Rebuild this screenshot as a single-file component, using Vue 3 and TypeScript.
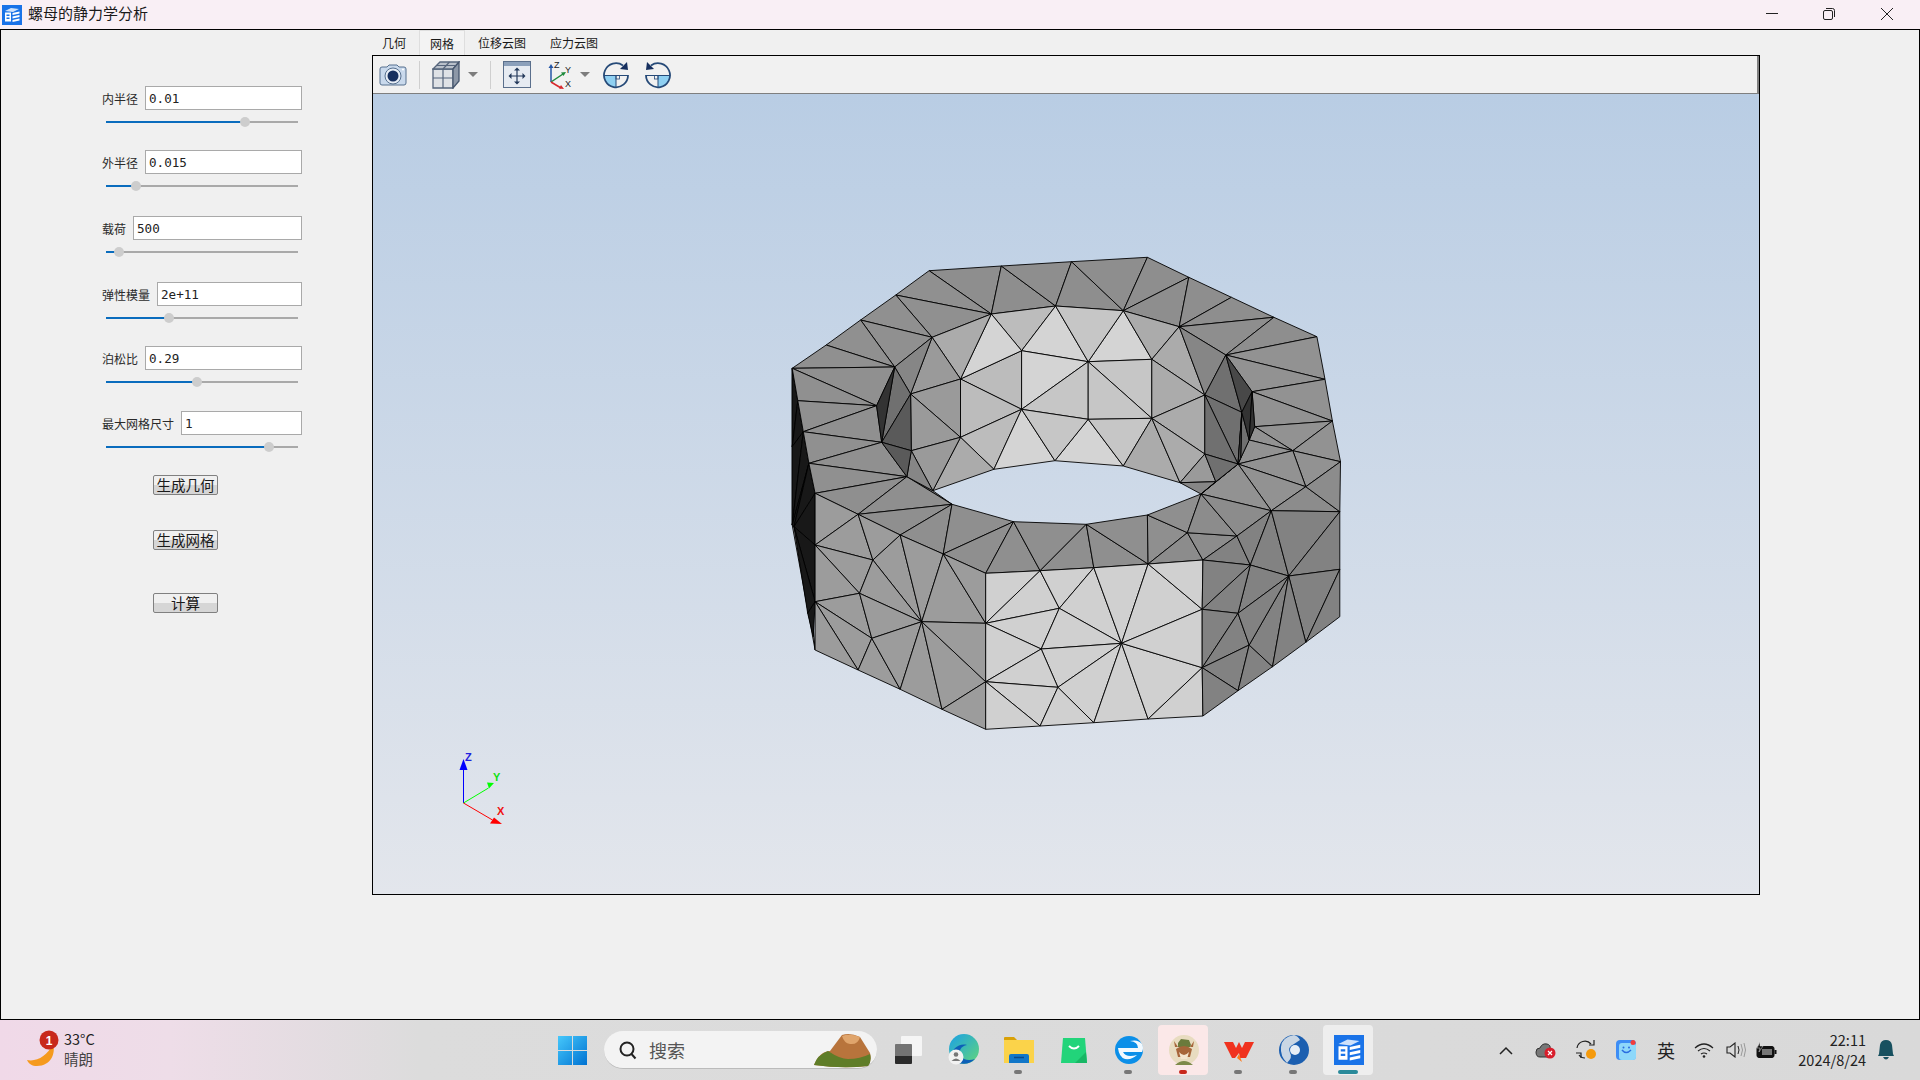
<script setup lang="ts">
// 参数面板
const params = [
  { label: '内半径', value: '0.01', pos: 139 },
  { label: '外半径', value: '0.015', pos: 30 },
  { label: '载荷', value: '500', pos: 13 },
  { label: '弹性模量', value: '2e+11', pos: 63 },
  { label: '泊松比', value: '0.29', pos: 91 },
  { label: '最大网格尺寸', value: '1', pos: 163 },
]
const tabs = ['几何', '网格', '位移云图', '应力云图']

// 网格顶点: 取自放大图的坐标, 换算到视口
const OX = 373
const OY = 94
const raw: Record<string, [number, number]> = {
  T0: [60, 385], T1: [152, 315], T2: [245, 240], T3: [340, 165], T4: [430, 92], T5: [625, 78], T6: [815, 65],
  T7: [1020, 52], T8: [1132, 112], T9: [1247, 172], T10: [1362, 232], T11: [1478, 290], T12: [1500, 418],
  T13: [1520, 543], T14: [1542, 665],
  I0: [598, 222], I1: [772, 198], I2: [955, 212], I3: [1106, 260], I4: [1232, 345], I5: [438, 292], I6: [337, 381],
  W1: [680, 332], W2: [860, 365], W3: [1032, 358], W4: [515, 417], W5: [380, 462], W6: [680, 508], W7: [860, 538],
  W8: [1032, 535], W9: [1175, 465], W10: [515, 592], W11: [382, 632], W12: [770, 662], W13: [605, 688],
  W14: [955, 678], W15: [1108, 728], W16: [1175, 642], W17: [440, 752], W18: [1275, 517], W19: [1265, 672],
  W20: [1205, 725],
  L1: [288, 497], L2: [75, 482], L3: [90, 575], L4: [302, 607], L5: [105, 670], L6: [370, 710],
  R1: [1413, 632], R2: [1448, 740], R3: [1303, 455], R4: [1310, 560], R5: [1295, 600], R6: [1272, 655],
  F0: [122, 760], F1: [238, 823], F2: [352, 885], F3: [468, 942], F4: [583, 1000],
  H2: [492, 793], H3: [658, 845], H4: [855, 853], H5: [1020, 825], H6: [1165, 762], H7: [1128, 878], H8: [1262, 888],
  G1: [730, 992], G2: [875, 983], G3: [1022, 972], G4: [1170, 960],
  J1: [1355, 812], J2: [1540, 815], J3: [1540, 988], J4: [1540, 1130], J5: [1298, 975], J6: [1402, 1008],
  K1: [1168, 1108], K2: [1265, 1120], K3: [1295, 1215], K4: [1168, 1283], K5: [1265, 1352], K6: [1358, 1280],
  K7: [1448, 1207], K8: [1170, 1428],
  N1: [583, 1150], N2: [782, 1105], N3: [733, 1227], N4: [950, 1210], N5: [583, 1325], N6: [778, 1342],
  M0: [583, 1468], B1: [730, 1458], B2: [875, 1448], B3: [1022, 1437],
  P0: [122, 915], P1: [278, 960], P2: [242, 1060], P3: [122, 1085], P4: [410, 1145], P5: [275, 1195],
  Q0: [122, 1230], Q1: [238, 1290], Q2: [352, 1348], Q3: [465, 1408],
  D1: [60, 855], D2: [60, 620], D4: [65, 860], D5: [102, 1120], D6: [117, 1190],
}

function pt(name: string) {
  const [x, y] = raw[name]
  return `${(770 + x * 0.37 - OX).toFixed(1)},${(240 + y / 3 - OY).toFixed(1)}`
}

const faceGroups: [string, string][] = [
  ['#8a8a8a', 'T0 D1 Q0'],
  ['#181818', 'T0 L2 D2,L2 L3 D2,L3 D2 D1,L3 L5 D1,L5 D1 D4,L5 F0 D4,F0 P0 D4,P0 P3 D4,P3 D4 D5,P3 D5 D6'],
  ['#8e8e8e', 'T4 T5 I0,T5 I1 I0,T5 T6 I1,T6 I2 I1,T6 T7 I2,T7 T8 I2,T8 I3 I2,T8 T9 I3,T9 T10 I3,T10 I4 I3,T10 T11 I4'],
  ['#929292', 'T11 T12 I4,I4 T12 R3,R3 T12 T13,R3 T13 R4,R4 T13 R1,R4 R1 R5,R5 R1 W19,T13 T14 R1,R1 T14 R2,W19 R1 R2,W19 R2 J1,W19 J1 H6'],
  ['#909090', 'T4 I0 T3,T3 I0 I5,T3 T2 I5,T2 I6 I5,T2 T1 I6,T1 T0 I6,T0 I6 L1,T0 L2 L1,L2 L1 L3,L1 L3 L4,L3 L4 L5,L4 L5 L6,L5 L6 F0'],
  ['#8f8f8f', 'F0 F1 L6,L6 W17 H2,F1 L6 H2,F1 H2 F2,F2 H2 F3,F3 H2 H3,F3 H3 F4,F4 H3 G1,H3 G1 H4,G1 H4 G2,H4 G2 G3,H4 H5 G3,H5 G3 H7,H5 H6 H7'],
  ['#8c8c8c', 'G3 H7 G4,H7 G4 H8,H6 H7 H8,H6 H8 J1,R2 J1 J2,R2 T14 J2'],
  ['#bcbcbc', 'I0 I1 W1,W4 W1 W6,W4 W6 W10,W6 W10 W13'],
  ['#d4d4d4', 'I1 W1 W2,I2 W2 W3,I0 W1 W4,W6 W12 W13,W7 W12 W14,W1 W2 W6'],
  ['#c6c6c6', 'I1 I2 W2,W2 W6 W7,W2 W3 W8,W2 W7 W8,W6 W7 W12,W7 W8 W14'],
  ['#ababab', 'I2 I3 W3,I3 W3 W9,I5 I0 W4,W3 W8 W9,W8 W9 W16,W10 W13 W17,W8 W14 W15,W8 W15 W16'],
  ['#9a9a9a', 'I5 W4 W5,W5 W4 W10,W5 W10 W11,W10 W11 W17,W15 W16 W20'],
  ['#868686', 'I3 I4 W9,I5 W5 I6,W11 L6 W17,W15 W20 H6,W20 W19 H6'],
  ['#707070', 'I4 W9 W18,W9 W18 W19,W9 W16 W19,W16 W19 W20,I6 W5 L4,W18 R6 R5,W18 R6 W19'],
  ['#5a5a5a', 'W5 W11 L4,L4 W11 L6,W18 R6 W19'],
  ['#484848', 'I4 W18 R3'],
  ['#333333', 'I6 L1 L4,R3 W18 R5,R3 R4 R5'],
  ['#9c9c9c', 'F0 F1 P0,F1 P0 P1,F1 F2 P1,F2 P1 P4,F2 F3 P4,F3 P4 N1,F3 F4 N1,P0 P1 P2,P0 P2 P3,P1 P2 P4,P2 P3 P5,P2 P4 P5,P3 P5 Q1,P3 Q1 Q0,P5 Q1 Q2,P5 Q2 P4,P4 Q2 Q3,P4 Q3 N5,P4 N5 N1,Q3 N5 M0'],
  ['#d0d0d0', 'F4 G1 N1,G1 N2 N1,G1 G2 N2,G2 N2 N4,G2 G3 N4,G3 N4 K1,G3 G4 K1,N1 N2 N3,N2 N3 N4,N1 N3 N5,N3 N4 N6,N3 N5 N6,N4 N6 B2,N4 B2 B3,N4 B3 K4,N4 K4 K1,N5 N6 B1,N5 B1 M0,N6 B1 B2,B3 K4 K8'],
  ['#828282', 'G4 H8 J5,G4 J5 K1,H8 J1 J5,J1 J5 J6,J1 J2 J6,J2 J3 J6,J6 J3 K7,J3 J4 K7,J5 J6 K2,J5 K1 K2,K1 K2 K4,K2 K4 K3,K4 K3 K5,K3 K5 K6,K3 K6 J6,K2 K3 J6,K6 K7 J6,K4 K5 K8'],
]

const faces = faceGroups.flatMap(([fill, list]) =>
  list.split(',').map((t) => ({ fill, points: t.split(' ').map(pt).join(' ') })),
)
</script>

<template>
  <div class="screen">
    <header class="titlebar">
      <svg class="app-icon" viewBox="0 0 20 20">
        <rect width="20" height="20" fill="#1a73e8" />
        <path d="M3 6l6-3 8 1-6 3z" fill="#cfe2fb" />
        <path d="M3 7.500h6v9H3z" fill="#fff" />
        <path d="M10.500 8l7-1.500v2l-7 1.500zM10.500 11.500l7-1.500v2l-7 1.500zM10.500 15l7-1.500v2l-7 1.500z" fill="#fff" />
        <path d="M4.500 9.500h3v1.500h-3zM4.500 12.500h3V14h-3z" fill="#1a73e8" />
      </svg>
      <span class="app-title">螺母的静力学分析</span>
      <div class="win-controls">
        <svg viewBox="0 0 58 29"><path d="M24 13.500h12" stroke="#222" /></svg>
        <svg viewBox="0 0 58 29">
          <rect x="23.500" y="10.500" width="9" height="9" rx="1.500" fill="none" stroke="#222" />
          <path d="M26 8.500h6.500a2 2 0 0 1 2 2V17" fill="none" stroke="#222" />
        </svg>
        <svg viewBox="0 0 58 29"><path d="M23 8l12 12M35 8L23 20" stroke="#222" /></svg>
      </div>
    </header>

    <main class="window">
      <aside class="panel">
        <div v-for="p in params" :key="p.label" class="param">
          <div class="param-row">
            <label>{{ p.label }}</label>
            <input :value="p.value" />
          </div>
          <div class="slider">
            <div class="slider-fill" :style="{ width: p.pos + 'px' }"></div>
          </div>
        </div>
        <div class="actions">
          <button>生成几何</button>
          <button>生成网格</button>
          <button class="calc">计算</button>
        </div>
      </aside>

      <section class="content">
        <nav class="tabs">
          <span v-for="(t, i) in tabs" :key="t" class="tab" :class="{ active: i === 1 }">{{ t }}</span>
        </nav>
        <div class="viewer">
          <div class="toolbar">
            <svg class="tool" width="28" height="24" viewBox="0 0 28 24">
              <path d="M1 6q0-2 2-2h5l2-2h8l2 2h5q2 0 2 2v14q0 2-2 2H3q-2 0-2-2z" fill="#c9d9ec" stroke="#56708f" />
              <circle cx="14" cy="13" r="8" fill="#e8eef6" stroke="#56708f" />
              <circle cx="14" cy="13" r="5.500" fill="#17305f" />
              <circle cx="24" cy="6.500" r="1" fill="#fff" />
            </svg>
            <i class="sep"></i>
            <svg class="tool" width="28" height="28" viewBox="0 0 28 28">
              <path d="M1 8h20v19H1z" fill="#dfe2e6" stroke="#56657c" stroke-width="1.300" />
              <path d="M1 8l7-7h19l-6 7z" fill="#b9c0ca" stroke="#56657c" stroke-width="1.300" />
              <path d="M21 8l6-7v19l-6 7z" fill="#8d98a8" stroke="#46566e" stroke-width="1.300" />
              <path d="M11 8v19M1 17h20M17.500 1l-6.500 7M4.500 4.500h19" stroke="#56657c" stroke-width="1.200" fill="none" />
            </svg>
            <i class="caret"></i>
            <i class="sep"></i>
            <svg class="tool" width="28" height="28" viewBox="0 0 28 28">
              <rect x=".5" y=".5" width="27" height="26" fill="#e6ebf2" stroke="#5a6f8c" />
              <path d="M1 1h26v4H1z" fill="#8ba0bb" />
              <path d="M14 8v14M7 15h14" stroke="#23395b" stroke-width="1.200" />
              <path d="M14 6.500l-3 3h6zM14 23.500l-3-3h6zM5.500 15l3-3v6zM22.500 15l-3-3v6z" fill="#23395b" />
            </svg>
            <svg class="tool axes" width="30" height="28" viewBox="0 0 30 28">
              <path d="M6 21V6" stroke="#2456a6" stroke-width="1.500" />
              <path d="M6 3l-2.500 4h5z" fill="#2456a6" />
              <path d="M6 21l12-8" stroke="#1f8a3d" stroke-width="1.500" />
              <path d="M21 11l-5 .5 2.500 3.500z" fill="#1f8a3d" />
              <path d="M6 21l10 6" stroke="#d8282c" stroke-width="1.500" />
              <path d="M19 28l-5-.5 2-3.500z" fill="#d8282c" />
              <text x="9" y="7" class="ax">Z</text><text x="20" y="12" class="ax">Y</text><text x="20" y="26" class="ax">X</text>
            </svg>
            <i class="caret"></i>
            <svg class="tool rot" width="28" height="28" viewBox="0 0 28 28">
              <path d="M2 14.500h12V26A12 12 0 0 1 2 14.500z" fill="#8fd0f2" />
              <path d="M2 14.500h24M14 14.500V26" stroke="#264a78" stroke-width="1" />
              <rect x="14" y="14.500" width="3.500" height="3.500" fill="none" stroke="#264a78" stroke-width=".8" />
              <path d="M21 4.500A12 12 0 1 0 26 14" fill="none" stroke="#264a78" stroke-width="1.800" />
              <path d="M25 1l1 8-8-1z" fill="#17305f" />
            </svg>
            <svg class="tool rot2" width="28" height="28" viewBox="0 0 28 28">
              <path d="M14 14.500h12A12 12 0 0 1 14 26z" fill="#8fd0f2" />
              <path d="M2 14.500h24M14 14.500V26" stroke="#264a78" stroke-width="1" />
              <rect x="10.500" y="14.500" width="3.500" height="3.500" fill="none" stroke="#264a78" stroke-width=".8" />
              <path d="M7 4.500A12 12 0 1 1 2 14" fill="none" stroke="#264a78" stroke-width="1.800" />
              <path d="M3 1L2 9l8-1z" fill="#17305f" />
            </svg>
          </div>
          <div class="scene">
            <svg class="mesh" width="1386" height="801" viewBox="0 0 1386 801">
              <polygon v-for="(f, i) in faces" :key="i" :points="f.points" :fill="f.fill" stroke="#000" stroke-width=".9" stroke-linejoin="round" />
              <g>
                <path d="M90.500 709V672" stroke="#0000ff" stroke-width="1" />
                <path d="M90.500 665l-4 11h8z" fill="#0000ff" />
                <path d="M90.500 709l25-15" stroke="#00ff00" stroke-width="1" />
                <path d="M121 689l-7-.5 2 6z" fill="#00ff00" />
                <path d="M90.500 709l29 17" stroke="#ff0000" stroke-width="1" />
                <path d="M129 730l-12-.5 4-6z" fill="#ff0000" />
                <text x="92" y="667" class="axis-letter" fill="#2020e0">Z</text>
                <text x="120" y="687" class="axis-letter" fill="#10e010">Y</text>
                <text x="124" y="721" class="axis-letter" fill="#f01010">X</text>
              </g>
            </svg>
          </div>
        </div>
      </section>
    </main>

    <footer class="taskbar">
      <div class="weather">
        <svg width="36" height="40" viewBox="0 0 36 40">
          <path d="M28 14c3 9-2 22-16 22-5 0-8-2-10-6 10 2 20-4 26-16z" fill="#f59a1e" />
          <circle cx="24" cy="10" r="9.500" fill="#c8281c" />
          <text x="24" y="14.500" class="badge">1</text>
        </svg>
        <div class="weather-text"><span>33°C</span><span class="dim">晴朗</span></div>
      </div>
      <svg class="start" width="29" height="29" viewBox="0 0 29 29">
        <defs>
          <linearGradient id="winG" x1="0" y1="0" x2="1" y2="1"><stop offset="0" stop-color="#46c8fb" /><stop offset="1" stop-color="#0072d2" /></linearGradient>
        </defs>
        <path d="M0 0h14v14H0zM15 0h14v14H15zM0 15h14v14H0zM15 15h14v14H15z" fill="url(#winG)" />
      </svg>
      <div class="search">
        <svg width="20" height="20" viewBox="0 0 20 20"><circle cx="9" cy="9" r="6.500" fill="none" stroke="#222" stroke-width="2" /><path d="M13.500 14l4 4.500" stroke="#222" stroke-width="2" /></svg>
        <span>搜索</span>
        <svg class="volcano" width="62" height="36" viewBox="0 0 62 36">
          <path d="M2 33q6-14 16-14L30 3q8-3 18 2l10 16q2 8-2 13-24 3-54-1z" fill="#b8743c" />
          <path d="M30 4q8-3 18 1-2 8-10 7-6-1-8-8z" fill="#e0a56c" />
          <path d="M2 33q3-10 14-14 12 8 20 8 12 0 22-5 2 7-2 12-26 3-54-1z" fill="#5f7d28" />
        </svg>
      </div>
      <div class="tasks">
        <div class="task">
          <svg width="27" height="28" viewBox="0 0 27 28">
            <rect x="6" y="0" width="21" height="20" rx="1" fill="#f5f5f5" />
            <rect x="0" y="8" width="17" height="20" rx="1" fill="#2b2b2b" />
            <rect x="0" y="8" width="17" height="12" fill="#bdbdbd" opacity=".5" />
          </svg>
        </div>
        <div class="task">
          <svg width="32" height="32" viewBox="0 0 32 32">
            <defs><linearGradient id="edgeG" x1="0" y1="0" x2="1" y2="1"><stop offset="0" stop-color="#1aa0e6" /><stop offset="1" stop-color="#63d67a" /></linearGradient></defs>
            <circle cx="16" cy="15" r="15" fill="url(#edgeG)" />
            <path d="M3 24c6 7 18 8 24 1-6 2-12 1-14-3-3-5 0-10 6-11-8-2-16 4-16 13z" fill="#0d5fb8" />
            <circle cx="8" cy="23" r="7.500" fill="#f2f2f2" />
            <circle cx="8" cy="20.500" r="2.300" fill="#777" /><path d="M3.500 27q4.500-5 9 0z" fill="#777" />
          </svg>
        </div>
        <div class="task running">
          <svg width="30" height="28" viewBox="0 0 30 28">
            <path d="M0 2q0-1 1-1h9l3 3h-13z" fill="#d9a107" />
            <path d="M0 4h30v23H0z" fill="#fbd34a" />
            <path d="M5 20q0-2 2-2h16q2 0 2 2v7H5z" fill="#1277c8" />
            <path d="M10 21.500h10" stroke="#0a4a8a" stroke-width="1.500" />
          </svg>
        </div>
        <div class="task">
          <svg width="26" height="27" viewBox="0 0 26 27">
            <path d="M2 1h22l2 25H0z" fill="#22d47a" />
            <path d="M14 26h12l-1-11z" fill="#18b765" />
            <path d="M8 9q5 5 10 0" fill="none" stroke="#fff" stroke-width="2" />
          </svg>
        </div>
        <div class="task running">
          <svg width="28" height="28" viewBox="0 0 28 28">
            <circle cx="14" cy="14" r="14" fill="#0b8fe8" />
            <path d="M3 12h20q0-6-8-7 8-2 12 3 2 4 0 8H8q3 6 14 3-5 5-12 4Q4 21 3 12z" fill="#fff" opacity=".95" />
          </svg>
        </div>
        <div class="task active-pink running-red">
          <svg width="30" height="30" viewBox="0 0 30 30">
            <circle cx="15" cy="15" r="15" fill="#e8dcc0" />
            <path d="M5 6l4 6h-3zM25 6l-4 6h3z" fill="#a7663a" />
            <path d="M9 8l3-4 8 1 2 5-1 2H9z" fill="#6b7a3c" />
            <path d="M7 14q8-6 16 0l-2 8H9z" fill="#a7663a" />
            <path d="M10 17q5 6 10 0l-2 7h-6z" fill="#f4e6d0" />
            <path d="M6 30q9-8 18 0z" fill="#7d8a4a" />
          </svg>
        </div>
        <div class="task running">
          <svg width="30" height="24" viewBox="0 0 30 24">
            <path d="M0 4h9l3 6 3-6 3 6 3-6h9l-8 16h-6l-1-5-4 5H8z" fill="#f0321e" />
            <path d="M13 20l2-4 3 8z" fill="#ff7a1a" />
          </svg>
        </div>
        <div class="task running">
          <svg width="30" height="30" viewBox="0 0 30 30">
            <circle cx="15" cy="15" r="15" fill="#1c5fb0" />
            <path d="M15 0Q3 2 2 12q-1 9 6 16 6-6 3-10-3-6 4-9 3-2 6-4-2-4-6-5z" fill="#c9d6e4" />
            <circle cx="16" cy="15" r="5" fill="#e7eef6" />
          </svg>
        </div>
        <div class="task app-tile">
          <svg width="30" height="30" viewBox="0 0 20 20">
            <rect width="20" height="20" fill="#1a73e8" />
            <path d="M3 6l6-3 8 1-6 3z" fill="#cfe2fb" />
            <path d="M3 7.500h6v9H3z" fill="#fff" />
            <path d="M10.500 8l7-1.500v2l-7 1.500zM10.500 11.500l7-1.500v2l-7 1.500zM10.500 15l7-1.500v2l-7 1.500z" fill="#fff" />
            <path d="M4.500 9.500h3v1.500h-3zM4.500 12.500h3V14h-3z" fill="#1a73e8" />
          </svg>
        </div>
      </div>
      <div class="tray">
        <div class="tray-item"><svg width="14" height="9" viewBox="0 0 14 9"><path d="M1 8l6-6 6 6" fill="none" stroke="#222" stroke-width="1.500" /></svg></div>
        <div class="tray-item">
          <svg width="22" height="18" viewBox="0 0 22 18">
            <path d="M1 11q0-4 4-4 2-5 7-4 4 1 3 5 3 2 0 8H5q-4 0-4-5z" fill="#777" stroke="#333" />
            <circle cx="15" cy="12" r="5.500" fill="#d81e2c" />
            <path d="M13 10l4 4M17 10l-4 4" stroke="#fff" stroke-width="1.200" />
          </svg>
        </div>
        <div class="tray-item">
          <svg width="22" height="22" viewBox="0 0 22 22">
            <path d="M2 9a8 8 0 0 1 14-4M18 12M4 16q2 3 6 3" fill="none" stroke="#222" stroke-width="1.200" />
            <path d="M19 1v5h-5M1 14h5v5" fill="none" stroke="#222" stroke-width="1.200" />
            <circle cx="16" cy="15" r="5" fill="#f59a0c" />
          </svg>
        </div>
        <div class="tray-item">
          <svg width="20" height="20" viewBox="0 0 20 20">
            <rect width="20" height="20" rx="4" fill="#3d8df5" />
            <rect x="3" y="3" width="17" height="17" rx="3" fill="#8ed8fa" />
            <path d="M6 10q4 5 9 0" fill="none" stroke="#2a6ee0" stroke-width="1.500" />
            <circle cx="7.500" cy="7.500" r="1" fill="#2a6ee0" /><circle cx="13" cy="7.500" r="1" fill="#2a6ee0" />
            <circle cx="17" cy="2.500" r="2.500" fill="#f23c3c" />
          </svg>
        </div>
        <div class="tray-item ime">英</div>
        <div class="tray-item small">
          <svg width="20" height="15" viewBox="0 0 20 15">
            <path d="M1 5q9-8 18 0M4 8q6-5 12 0M7 11q3-2 6 0" fill="none" stroke="#222" stroke-width="1.200" />
            <circle cx="10" cy="13.500" r="1.300" fill="#222" />
          </svg>
        </div>
        <div class="tray-item narrow">
          <svg width="20" height="16" viewBox="0 0 20 16">
            <path d="M1 5h3l5-4v14l-5-4H1z" fill="none" stroke="#222" stroke-width="1.100" />
            <path d="M12 4q2 4 0 8" fill="none" stroke="#222" />
            <path d="M15 2q3 6 0 12M18 1q3 7 0 14" fill="none" stroke="#999" />
          </svg>
        </div>
        <div class="tray-item narrow">
          <svg width="21" height="17" viewBox="0 0 21 17">
            <rect x="1" y="4.500" width="17" height="11" rx="2" fill="#111" stroke="#111" />
            <rect x="6" y="7" width="10" height="6" fill="#777" />
            <rect x="18.500" y="8" width="2" height="4" fill="#111" />
            <path d="M4 0L1 6h3L3 10l4-6H4z" fill="#111" stroke="#ddd" stroke-width=".5" />
          </svg>
        </div>
        <div class="clock"><span>22:11</span><span>2024/8/24</span></div>
        <svg class="bell" width="16" height="20" viewBox="0 0 16 20">
          <path d="M8 0q5 0 6 5l1 9 1 2H0l1-2 1-9q1-5 6-5z" fill="#17505f" />
          <path d="M5 17h6q-3 5-6 0z" fill="#17505f" />
        </svg>
      </div>
    </footer>
  </div>
</template>

<style>
html,
body {
  margin: 0;
  overflow: hidden;
}
</style>

<style scoped>
.screen {
  width: 1920px;
  height: 1080px;
  display: flex;
  flex-direction: column;
  font-family: "Noto Sans CJK SC", "Liberation Sans", sans-serif;
  color: #1a1a1a;
}
.titlebar {
  height: 29px;
  flex: none;
  display: flex;
  align-items: center;
  background: #f9eff5;
  padding-left: 2px;
}
.app-icon {
  width: 20px;
  height: 20px;
  margin-right: 6px;
}
.app-title {
  font-size: 15px;
  line-height: 26px;
  margin-bottom: 3px;
}
.win-controls {
  margin-left: auto;
  display: flex;
  margin-right: 4px;
}
.win-controls svg {
  width: 58px;
  height: 29px;
  display: block;
}
.window {
  height: 991px;
  flex: none;
  box-sizing: border-box;
  display: flex;
  background: #f0f0f0;
  border: 1px solid #000;
}
.panel {
  width: 371px;
  flex: none;
  box-sizing: border-box;
  padding: 56px 0 0 101px;
}
.param {
  width: 200px;
  height: 64px;
}
.param:nth-child(2),
.param:nth-child(3) {
  height: 66px;
}
.param:nth-child(5) {
  height: 65px;
}
.param-row {
  display: flex;
  align-items: center;
  height: 24px;
  gap: 7px;
}
.param-row label {
  font-size: 12px;
  color: #2a2a2a;
  white-space: nowrap;
}
.param-row input {
  flex: 1;
  min-width: 0;
  height: 24px;
  box-sizing: border-box;
  border: 1px solid #a9a9a9;
  background: #fff;
  padding: 0 3px;
  font: 12.600px "DejaVu Sans Mono", monospace;
  color: #222;
  outline: none;
}
.slider {
  width: 192px;
  height: 2px;
  margin: 11px 0 0 4px;
  background: #a9a9a9;
}
.slider-fill {
  height: 2px;
  background: #0a6cbd;
  position: relative;
}
.slider-fill::after {
  content: "";
  position: absolute;
  right: -5px;
  top: -4px;
  width: 10px;
  height: 10px;
  border-radius: 50%;
  background: #cdcdcd;
}
.actions {
  display: flex;
  flex-direction: column;
  align-items: flex-start;
  padding-left: 51px;
}
.actions button {
  width: 65px;
  height: 20px;
  box-sizing: border-box;
  padding: 0;
  border: 1px solid #808080;
  border-radius: 2px;
  background: linear-gradient(#f0f0f0 50%, #d6d6d6 50%);
  font: 14.500px/18px "Noto Sans CJK SC", sans-serif;
  color: #1a1a1a;
  margin-bottom: 35px;
}
.actions button:nth-child(2) {
  margin-bottom: 43px;
}
.content {
  flex: 1;
  min-width: 0;
}
.tabs {
  height: 25px;
  display: flex;
  align-items: center;
  font-size: 12px;
  padding-left: 0;
}
.tab {
  height: 25px;
  line-height: 26px;
  padding: 0 12px;
  box-sizing: border-box;
}
.tab:first-child {
  padding-left: 10px;
}
.tab.active {
  background: #f3f3f3;
  border: 1px solid #dedede;
  border-bottom: none;
  padding: 0 10px;
  margin: 0 1px;
}
.viewer {
  width: 1388px;
  height: 840px;
  box-sizing: border-box;
  border: 1px solid #000;
  display: flex;
  flex-direction: column;
}
.toolbar {
  height: 38px;
  flex: none;
  box-sizing: border-box;
  background: #f1f1f1;
  border-bottom: 1px solid #7f7f7f;
  border-right: 2px solid #7f7f7f;
  padding-left: 6px;
  display: flex;
  align-items: center;
}
.tool {
  flex: none;
  display: block;
}
.sep {
  width: 1px;
  height: 28px;
  background: #cfcfcf;
  margin: 0 12px;
}
.caret {
  width: 0;
  height: 0;
  border-left: 5px solid transparent;
  border-right: 5px solid transparent;
  border-top: 5px solid #7d7d7d;
  margin-left: 8px;
}
.axes {
  margin-left: 14px;
}
.axes + .caret {
  margin-left: 5px;
}
.rot {
  margin-left: 12px;
}
.rot2 {
  margin-left: 14px;
}
.ax {
  font: 9px "Liberation Sans", sans-serif;
  fill: #222;
}
.scene {
  flex: 1;
  position: relative;
  background: linear-gradient(#b9cde4, #e3e6ec);
  overflow: hidden;
}
.mesh {
  position: absolute;
  left: 0;
  top: 0;
}
.axis-letter {
  font: bold 11px "Liberation Sans", sans-serif;
}
.taskbar {
  flex: 1;
  display: flex;
  align-items: center;
  background: linear-gradient(90deg, #f0d9e8 0, #eedde8 170px, #dcdcdc 420px, #d9d9d9 100%);
}
.weather {
  width: 558px;
  flex: none;
  box-sizing: border-box;
  padding-left: 25px;
  display: flex;
  align-items: center;
  gap: 3px;
}
.weather-text {
  display: flex;
  flex-direction: column;
  font-size: 14.500px;
  line-height: 20px;
  color: #222;
  margin-bottom: 2px;
}
.weather-text .dim {
  color: #444;
}
.badge {
  font: bold 12px "Liberation Sans", sans-serif;
  fill: #fff;
  text-anchor: middle;
}
.start {
  flex: none;
  margin-right: 17px;
}
.search {
  position: relative;
  width: 273px;
  height: 38px;
  flex: none;
  box-sizing: border-box;
  border-radius: 19px;
  background: #f3f3f3;
  border-bottom: 1px solid #bbb;
  display: flex;
  align-items: center;
  padding-left: 14px;
  gap: 11px;
  font-size: 18px;
  color: #555;
}
.volcano {
  position: absolute;
  right: 3px;
  top: 1px;
}
.tasks {
  display: flex;
  margin-left: 4px;
}
.task {
  position: relative;
  width: 55px;
  height: 60px;
  display: flex;
  align-items: center;
  justify-content: center;
  box-sizing: border-box;
}
.task > svg {
  position: relative;
}
.task.running::after,
.task.running-red::after,
.task.app-tile::after {
  content: "";
  position: absolute;
  bottom: 6px;
  left: 23px;
  width: 8px;
  height: 4px;
  border-radius: 2px;
  background: #777;
}
.task.running-red::after {
  background: #c8281c;
}
.task.app-tile::after {
  left: 17px;
  width: 20px;
  background: #2a8a9a;
}
.task.active-pink::before,
.task.app-tile::before {
  content: "";
  position: absolute;
  top: 5px;
  left: 2px;
  width: 50px;
  height: 50px;
  border-radius: 4px;
  background: #fbe8e8;
}
.task.app-tile::before {
  background: #eeeeee;
}
.tray {
  margin-left: auto;
  display: flex;
  align-items: center;
  margin-right: 26px;
}
.tray-item {
  width: 40px;
  height: 40px;
  display: flex;
  align-items: center;
  justify-content: center;
}
.tray-item.small {
  width: 35px;
}
.tray-item.narrow {
  width: 30px;
}
.ime {
  font-size: 18px;
  color: #222;
}
.clock {
  width: 85px;
  display: flex;
  flex-direction: column;
  align-items: flex-end;
  font-size: 14.500px;
  line-height: 20px;
  color: #222;
}
.bell {
  margin-left: 12px;
}
</style>
